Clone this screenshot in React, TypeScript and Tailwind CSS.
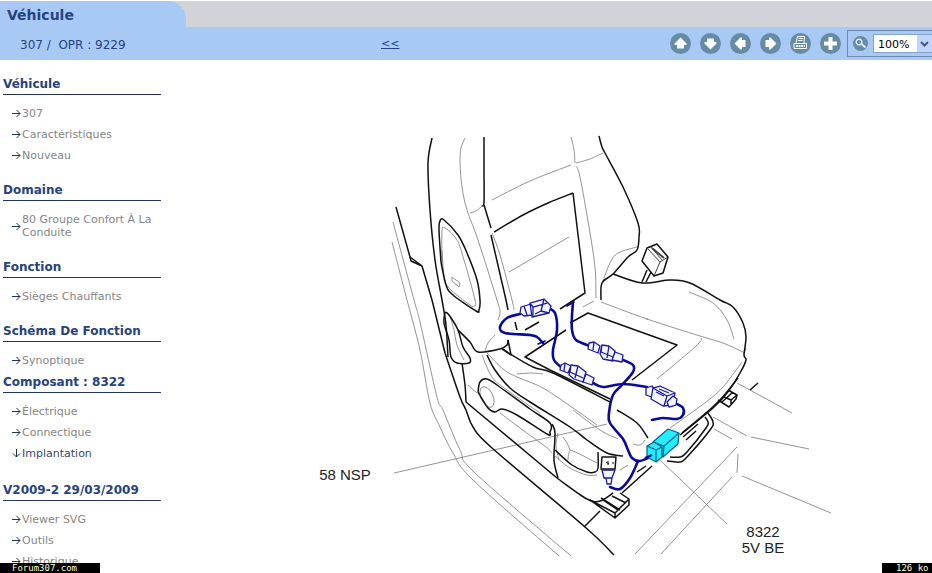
import React from 'react';

type MenuItem = { label: string; active?: boolean };

type SectionProps = {
  title: string;
  items: MenuItem[];
  className?: string;
};

const Arrow: React.FC<{ down?: boolean }> = ({ down }) => (
  <svg
    viewBox="0 0 9 9"
    className={`w-[9px] h-[9px] shrink-0 ${down ? 'rotate-90' : ''}`}
    fill="none"
    stroke="#1f3158"
    aria-hidden="true"
  >
    <path d="M0 4.5H8M4.5 1L8 4.5L4.5 8" />
  </svg>
);

const Section: React.FC<SectionProps> = ({ title, items, className = 'pb-3.5' }) => (
  <section className={className}>
    <h2 className="border-b border-[#24365f] pt-0.5 text-xs font-bold leading-[19px] text-[#26427f]">{title}</h2>
    <ul className="pt-2 pl-[9px]">
      {items.map((item) => (
        <li key={item.label}>
          <a
            href="#"
            className={`flex items-center gap-px py-1 leading-[13px] ${item.active ? 'text-[#34476f]' : 'text-[#858585]'}`}
          >
            <Arrow down={item.active} />
            <span>{item.label}</span>
          </a>
        </li>
      ))}
    </ul>
  </section>
);

const sections: SectionProps[] = [
  {
    title: 'Véhicule',
    items: [{ label: '307' }, { label: 'Caractéristiques' }, { label: 'Nouveau' }],
    className: 'pb-[13px]',
  },
  {
    title: 'Domaine',
    items: [{ label: '80 Groupe Confort À La Conduite' }],
    className: 'pb-[13px]',
  },
  { title: 'Fonction', items: [{ label: 'Sièges Chauffants' }], className: 'pb-[13px]' },
  { title: 'Schéma De Fonction', items: [{ label: 'Synoptique' }], className: 'pb-0' },
  {
    title: 'Composant : 8322',
    items: [{ label: 'Électrique' }, { label: 'Connectique' }, { label: 'Implantation', active: true }],
    className: 'pb-[15px]',
  },
  {
    title: 'V2009-2 29/03/2009',
    items: [{ label: 'Viewer SVG' }, { label: 'Outils' }, { label: 'Historique' }],
  },
];

const arrowUp = 'M10.5 4.5L16.5 10.5V12H14V15.5H7V12H4.5V10.5Z';

const tools = [
  { label: 'Haut', icon: <path d={arrowUp} fill="#fff" /> },
  { label: 'Bas', icon: <path d={arrowUp} fill="#fff" transform="rotate(180 10.5 10.5)" /> },
  { label: 'Gauche', icon: <path d={arrowUp} fill="#fff" transform="rotate(-90 10.5 10.5)" /> },
  { label: 'Droite', icon: <path d={arrowUp} fill="#fff" transform="rotate(90 10.5 10.5)" /> },
  {
    label: 'Imprimer',
    icon: (
      <g fill="none" stroke="#fff">
        <path d="M6 10L7.5 3.5H14.5L14 10M8.5 5.5H13M8 7.5H12.5" />
        <path d="M4 10.5H16.5V15.5H4Z" />
        <path d="M6 13H15" strokeWidth="2" strokeDasharray="2 0.6" />
      </g>
    ),
  },
  { label: 'Ajouter', icon: <path d="M10.5 4V17M4 10.5H17" stroke="#fff" strokeWidth="4" /> },
];

// Catmull-Rom spline through a list of "x,y" points
const smooth = (list: string) => {
  const p = list.split(' ').map((s) => s.split(',').map(Number));
  let d = `M${p[0][0]} ${p[0][1]}`;
  for (let i = 0; i < p.length - 1; i++) {
    const a = p[i - 1] || p[i];
    const b = p[i];
    const c = p[i + 1];
    const e = p[i + 2] || c;
    d += `C${b[0] + (c[0] - a[0]) / 6} ${b[1] + (c[1] - a[1]) / 6} ${c[0] - (e[0] - b[0]) / 6} ${c[1] - (e[1] - b[1]) / 6} ${c[0]} ${c[1]}`;
  }
  return d;
};

const thinCurves = [
  '465,138 461,148 460,163 462,187 467,210 478,240 497,300 500,312 498,320',
  '470,213 476,211 482,206',
  '492,200 530,181 571,165',
  '571,137 574,150 575,163',
  '492,233 500,255 512,300 514,310',
  '393,222 414,300 420,322 437,397 443,410 460,450 475,473 571,556',
  '392,242 407,300 420,350 430,403 440,427 453,453 473,480 559,556',
  '442,267 442,232 445,228 457,240 464,260 475,300 474,306 470,305 449,288 444,275 442,250',
  '576,166 580,177 589,227 595,267 596,298',
  '576,163 590,159 603,153',
  '637,247 618,253 610,263 603,281',
  '689,292 713,303 727,320 734,339',
  '601,302 647,319 700,336 723,343 745,353',
  '702,338 695,347 657,379',
  '742,362 723,387 706,402 670,428',
  '495,335 488,343 485,351',
  '482,355 492,377 507,390 540,413',
  '487,353 503,369 517,377 543,388 573,408 597,425',
  '517,374 532,373 543,374',
  '450,316 454,330 457,345 464,360',
  '500,413 520,428 546,447 552,453',
  '573,410 600,430 618,439',
  '568,460 569,453 573,451 597,463',
  '563,437 567,443 570,450',
  '558,433 556,446 559,460',
  '633,444 640,445 645,440',
  '555,456 570,468 587,475 597,475',
];

const thinLines = [
  'M509 272L569 237',
  'M583 307L594 301',
  'M452 277L460 283L459 287L452 281Z',
  'M737 383L792 413',
  'M713 417L747 436',
  'M751 437L809 449',
  'M714 429L732 439',
  'M737 447L635 554',
  'M738 454L737 473',
  'M732 477L661 554',
  'M742 476L831 513',
  'M660 460L727 524',
  'M394 473L607 424',
  'M620 470L628 465M468 385L477 393',
  'M744 354L746 348M647 318V320',
];

const thickCurves = [
  '432,138 428,163 430,210 435,260 442,300 446,325 448,357',
  '484,137 484,170 484,202 482,206',
  '494,232 523,215 548,203 573,193',
  '599,136 602,147 605,153 623,187 638,223 639,237 637,250 628,257 613,274 602,283 601,300',
  '441,262 439,230 440,221 444,220 458,235 467,253 477,280 480,300 479,310 476,311 453,295 446,285 441,262',
  '613,274 642,283 670,280 690,283 720,300 733,307 743,323 746,337 744,355 746,360 740,373 727,393 713,408 680,435',
  '445,353 460,397 466,410 473,427 492,448 585,527 614,555',
  '445,312 449,315 458,330 463,347 470,358 469,363 457,363 451,357 449,340 444,323 445,312',
  '458,330 470,342 478,352 500,349 507,345 508,340',
  '502,349 533,367 553,373 610,402',
  '487,355 495,370 510,388 530,402 570,427 587,440 607,453 623,456',
  '478,392 480,382 487,379 497,385 530,409 550,423 550,432 547,434 517,415 502,409 495,412 488,408 478,392',
  '552,424 555,433 554,460 558,478',
  '555,450 572,465 587,472 595,472 598,468 598,452',
  '462,363 465,385 466,402',
  '557,478 587,499 600,501 613,493',
  '617,410 637,423 648,438',
  '708,413 713,422 710,430 687,457 680,462 667,461',
  '705,417 708,422 706,428 687,452 680,457 670,457',
  '738,378 717,403 682,433',
];

const thickLines = [
  'M396 207L410 257L422 266L432 300L445 353',
  'M410 257L411 261L422 266',
  'M484 205L491 228M491 235L506 300L508 310',
  'M573 193L585 293L560 309',
  'M525 330L539 322M515 322L517 330',
  'M508 340L511 355L503 349',
  'M570 323L588 313L677 345L632 380',
  'M566 330L525 357L550 370L610 399',
  'M466 402L557 478',
  'M750 390L758 383M683 437L698 424M686 440L696 431',
  'M718 400L729 407L736 399L737 395L728 390M724 397L731 400L737 395M731 400V406M722 402L733 392',
  'M590 500L615 518L629 505V499L620 493M615 518V513L629 499M590 500L615 513M603 500L618 510M612 496L626 503M601 498L620 510',
  'M584 527L600 511',
  'M622 493L652 466M637 472L646 466',
  'M602 457H616L615 469H601Z',
  'M647 248L657 244L668 257L663 273L654 276L642 261Z',
  'M647 270L642 282M651 272L646 282',
];

const wires = [
  '520,314 507,318 500,327 505,333 530,335 537,337 543,343',
  '548,308 555,313 557,330 553,350 554,360 561,367',
  '573,302 572,316 572,330 576,340 590,346',
  '623,360 633,365 633,372 622,385 613,395 609,413 610,423 623,439 628,450 632,458 640,461 652,456',
  '593,383 603,387 623,384 647,387',
  '677,404 683,408 683,415 677,419 663,418 652,420',
  '638,461 630,478 620,489 610,487',
];

const SeatDiagram: React.FC = () => (
  <svg
    viewBox="170 60 762 513"
    className="block w-full"
    fill="none"
    role="img"
    aria-label="Implantation siège chauffant"
  >
    <g stroke="#777" strokeWidth="0.8">
      {thinCurves.map((c) => (
        <path key={c} d={smooth(c)} />
      ))}
      {thinLines.map((d) => (
        <path key={d} d={d} />
      ))}
      <ellipse cx="487" cy="397" rx="6" ry="11" transform="rotate(-25 487 397)" />
    </g>
    <g stroke="#111" strokeWidth="1.5" strokeLinejoin="round">
      {thickCurves.map((c) => (
        <path key={c} d={smooth(c)} />
      ))}
      {thickLines.map((d) => (
        <path key={d} d={d} />
      ))}
      <path d="M648 249L660 262L668 257M660 262L654 276M650 246L662 260" strokeWidth="0.8" />
      <path d="M652 248L664 258" strokeWidth="2" stroke="#444" />
      <path d="M606 462L609 464M608 461V465M612 463H614" strokeWidth="1" />
    </g>
    <g stroke="#0a0a9a" strokeWidth="2.6" strokeLinecap="round">
      {wires.map((c) => (
        <path key={c} d={smooth(c)} />
      ))}
      <path d="M567 306L574 302M538 344L545 341" strokeWidth="1.6" />
    </g>
    <g stroke="#1a1aa0" strokeWidth="1.3" fill="#f4f4ff" strokeLinejoin="round">
      <path d="M521 307L531 304L533 315L524 316L520 313Z" />
      <path d="M530 303L544 299L551 306L549 313L532 317Z" />
      <path d="M530 303L533 307L547 303M533 307V316M544 299L541 311L549 313M541 311L535 314M524 306L527 315" />
      <path d="M561 365L565 363L571 366L568 373L560 370Z" />
      <path d="M571 365L578 366L586 372L583 382L574 379L569 375Z" />
      <path d="M586 374L594 378L592 385L583 382Z" />
      <path d="M571 365L570 372L583 378M578 366L575 378M565 363L564 371" />
      <path d="M589 343L594 342L600 346L598 353L588 349Z" />
      <path d="M602 345L609 346L615 351L613 361L603 359L600 354Z" />
      <path d="M615 352L623 355L622 362L612 360Z" />
      <path d="M602 345L601 352L613 357M609 346L607 358M594 342L593 350" />
      <path d="M646 388L652 386L655 390L652 397L646 395Z" />
      <path d="M653 388L660 386L675 393L673 405L663 406L651 399Z" />
      <path d="M673 396L677 399L676 405L669 407L667 402Z" />
      <path d="M653 388L667 396L675 393M667 396L664 406M656 392L664 396M659 389L669 393" />
      <path d="M602 470H615L612 478H604ZM606 478H612L611 484H607Z" />
    </g>
    <g fill="#22eeff" stroke="#0b5f86" strokeWidth="1.2" strokeLinejoin="round">
      <path d="M653 442L668 429L679 433L678 444L663 457L654 450Z" />
      <path d="M653 442L664 446L679 433M664 446L663 457" />
      <path d="M647 446L654 442L662 447V457L656 462L647 457Z" />
      <path d="M647 446L656 450L662 447M656 450V462" />
    </g>
    <path d="M645 458L652 455" stroke="#0a0a9a" strokeWidth="2.4" />
    <g
      fill="#222"
      textAnchor="middle"
      className="font-['Liberation_Sans',Arial,sans-serif] text-[15px]"
    >
      <text x="345" y="480">58 NSP</text>
      <text x="763" y="537">8322</text>
      <text x="763" y="553">5V BE</text>
    </g>
  </svg>
);

export default function App() {
  return (
    <div className="relative flex h-screen flex-col overflow-hidden bg-white pt-px font-['DejaVu_Sans',Verdana,sans-serif] text-[11px]">
      <header className="shrink-0 text-[#26427f]">
        <div className="bg-[#d2d3d8]">
          <h1 className="h-[26px] w-[186px] rounded-tr-[18px] bg-[#a9c9f5] pl-[7px] text-sm font-bold leading-7">
            Véhicule
          </h1>
        </div>
        <div className="flex h-[33px] items-center bg-[#a9c9f5]">
          <p className="w-[381px] whitespace-pre pl-5 pt-0.5 text-xs">{'307 /  OPR : 9229'}</p>
          <a href="#" className="pt-0.5 underline">
            &lt;&lt;
          </a>
          <div className="ml-auto flex items-center gap-[9px] pr-1.5">
            {tools.map((tool) => (
              <button key={tool.label} type="button" aria-label={tool.label} className="block">
                <svg viewBox="0 0 21 21" className="block size-[21px]">
                  <circle cx="10.5" cy="10.5" r="10.5" fill="#658ba5" />
                  {tool.icon}
                </svg>
              </button>
            ))}
          </div>
          <div className="flex h-[27px] items-center gap-[5px] border border-r-0 border-[#6f88ad] pl-[5px]">
            <svg viewBox="0 0 15 15" className="size-[15px]" fill="none" aria-hidden="true">
              <circle cx="7.5" cy="7.5" r="7.5" fill="#658ba5" />
              <circle cx="6" cy="6" r="2.8" stroke="#dfe9f5" strokeWidth="1.4" />
              <path d="M8.5 8L12.5 11.5" stroke="#dfe9f5" strokeWidth="2" />
            </svg>
            <div className="relative">
              <select
                aria-label="Zoom"
                defaultValue="100%"
                className="block h-[19px] w-[59px] appearance-none border border-r-0 border-[#86a3cb] bg-white pl-1 pt-0.5 text-[11px] text-black"
              >
                <option>50%</option>
                <option>100%</option>
                <option>200%</option>
              </select>
              <svg
                viewBox="0 0 15 17"
                className="pointer-events-none absolute right-0 top-px h-[17px] w-[15px] bg-[#c3d4fb]"
                fill="none"
                aria-hidden="true"
              >
                <path d="M4 7L7.5 10.5L11 7" stroke="#42587f" strokeWidth="2" />
              </svg>
            </div>
          </div>
        </div>
      </header>

      <div className="flex min-h-0 flex-1">
        <nav className="w-[170px] shrink-0 pl-[3px] pr-[9px] pt-[13px]">
          {sections.map((section) => (
            <Section key={section.title} {...section} />
          ))}
        </nav>
        <main className="min-w-0 flex-1">
          <SeatDiagram />
        </main>
      </div>

      <footer className="absolute inset-x-0 bottom-0 flex justify-between font-['DejaVu_Sans_Mono',monospace] text-[9px] leading-[10px] text-[#ffffc8]">
        <span className="w-[100px] bg-black pl-3">Forum307.com</span>
        <span className="w-[50px] bg-black pl-3.5">126 ko</span>
      </footer>
    </div>
  );
}
